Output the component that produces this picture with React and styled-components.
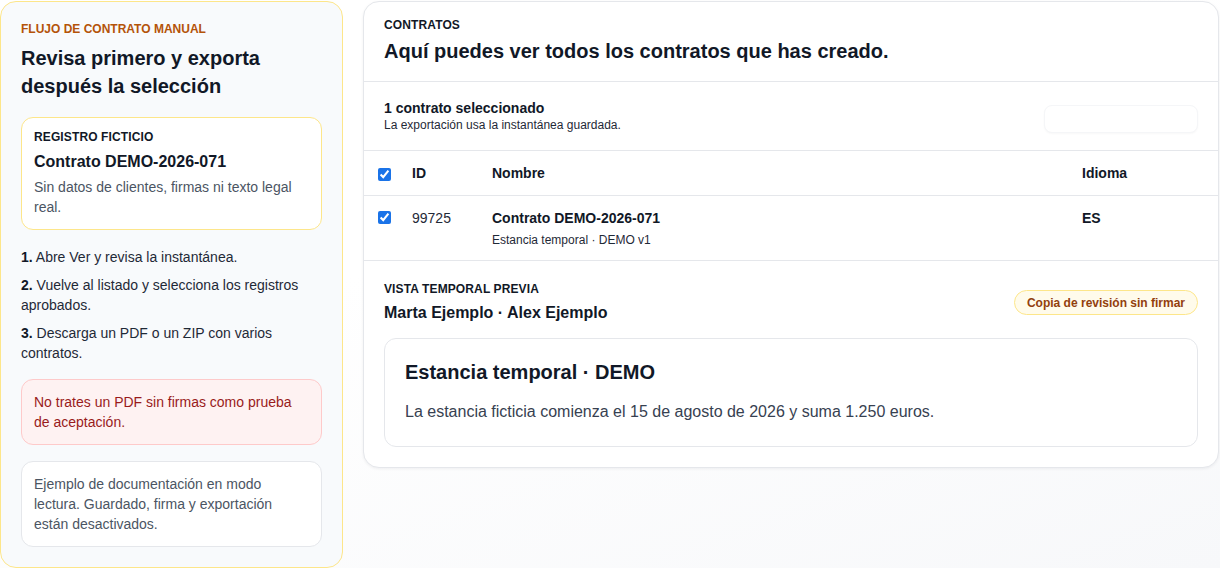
import React from 'react';
import styled, { createGlobalStyle } from 'styled-components';

const GlobalStyle = createGlobalStyle`
  html, body {
    margin: 0;
    padding: 0;
  }
  body {
    font-family: "Liberation Sans", Arial, sans-serif;
    color: #111827;
    background: linear-gradient(160deg, #ffffff 40%, #f7f8fa 100%);
    min-height: 100vh;
  }
  * {
    box-sizing: border-box;
  }
`;

const steps = [
  { n: '1.', text: 'Abre Ver y revisa la instantánea.' },
  { n: '2.', text: 'Vuelve al listado y selecciona los registros aprobados.' },
  { n: '3.', text: 'Descarga un PDF o un ZIP con varios contratos.' },
];

const contracts = [
  {
    id: '99725',
    name: 'Contrato DEMO-2026-071',
    sub: 'Estancia temporal · DEMO v1',
    lang: 'ES',
    checked: true,
  },
];

const App = () => {
  return (
    <>
      <GlobalStyle />
      <Page>
        <Sidebar>
          <Eyebrow>Flujo de contrato manual</Eyebrow>
          <SideTitle>Revisa primero y exporta después la selección</SideTitle>

          <RecordCard>
            <Label>Registro ficticio</Label>
            <RecordTitle>Contrato DEMO-2026-071</RecordTitle>
            <RecordText>Sin datos de clientes, firmas ni texto legal real.</RecordText>
          </RecordCard>

          <Steps>
            {steps.map((s) => (
              <Step key={s.n}>
                <strong>{s.n}</strong> {s.text}
              </Step>
            ))}
          </Steps>

          <Notice tone="danger">No trates un PDF sin firmas como prueba de aceptación.</Notice>
          <Notice tone="muted">
            Ejemplo de documentación en modo lectura. Guardado, firma y exportación están desactivados.
          </Notice>
        </Sidebar>

        <Main>
          <MainHeader>
            <Label>Contratos</Label>
            <MainTitle>Aquí puedes ver todos los contratos que has creado.</MainTitle>
          </MainHeader>

          <SelectionBar>
            <div>
              <SelectionTitle>1 contrato seleccionado</SelectionTitle>
              <SelectionHint>La exportación usa la instantánea guardada.</SelectionHint>
            </div>
            <GhostButton type="button" aria-label="Exportar" />
          </SelectionBar>

          <TableRow head>
            <Check type="checkbox" defaultChecked readOnly />
            <HeadCell>ID</HeadCell>
            <HeadCell>Nombre</HeadCell>
            <HeadCell>Idioma</HeadCell>
          </TableRow>

          {contracts.map((c) => (
            <TableRow key={c.id}>
              <Check type="checkbox" defaultChecked={c.checked} readOnly />
              <IdCell>{c.id}</IdCell>
              <div>
                <NameCell>{c.name}</NameCell>
                <SubCell>{c.sub}</SubCell>
              </div>
              <LangCell>{c.lang}</LangCell>
            </TableRow>
          ))}

          <Preview>
            <PreviewHeader>
              <div>
                <Label>Vista temporal previa</Label>
                <Parties>Marta Ejemplo · Alex Ejemplo</Parties>
              </div>
              <Badge>Copia de revisión sin firmar</Badge>
            </PreviewHeader>

            <DocCard>
              <DocTitle>Estancia temporal · DEMO</DocTitle>
              <DocText>La estancia ficticia comienza el 15 de agosto de 2026 y suma 1.250 euros.</DocText>
            </DocCard>
          </Preview>
        </Main>
      </Page>
    </>
  );
};

export default App;

// region STYLES

const Page = styled.div`
  display: grid;
  grid-template-columns: 343px 1fr;
  gap: 20px;
  align-items: start;
  padding: 1px 1px 0 0;
`;

const Sidebar = styled.aside`
  background: #f8fafc;
  border: 1px solid #fde68a;
  border-radius: 16px;
  padding: 19px 20px 20px;
  min-height: 566px;
`;

const Eyebrow = styled.div`
  font-size: 12px;
  line-height: 16px;
  font-weight: 700;
  text-transform: uppercase;
  color: #b45309;
`;

const SideTitle = styled.h2`
  margin: 7px 0 17px;
  font-size: 20px;
  line-height: 28px;
  font-weight: 700;
  color: #111827;
`;

const RecordCard = styled.div`
  background: #ffffff;
  border: 1px solid #fde68a;
  border-radius: 12px;
  padding: 11px 12px 12px;
`;

const Label = styled.div`
  font-size: 12px;
  line-height: 16px;
  font-weight: 700;
  text-transform: uppercase;
  color: #111827;
  letter-spacing: 0.01em;
`;

const RecordTitle = styled.div`
  margin-top: 6px;
  font-size: 16px;
  line-height: 22px;
  font-weight: 700;
`;

const RecordText = styled.p`
  margin: 4px 0 0;
  font-size: 14px;
  line-height: 20px;
  color: #4b5563;
`;

const Steps = styled.ol`
  list-style: none;
  margin: 17px 0 16px;
  padding: 0;
  display: flex;
  flex-direction: column;
  gap: 8px;
`;

const Step = styled.li`
  font-size: 14px;
  line-height: 20px;
  color: #1f2937;

  strong {
    color: #111827;
  }
`;

const Notice = styled.div`
  border-radius: 12px;
  padding: 12px;
  font-size: 14px;
  line-height: 20px;
  background: ${(p) => (p.tone === 'danger' ? '#fef2f2' : '#ffffff')};
  border: 1px solid ${(p) => (p.tone === 'danger' ? '#fecaca' : '#e5e7eb')};
  color: ${(p) => (p.tone === 'danger' ? '#991b1b' : '#4b5563')};

  & + & {
    margin-top: 16px;
  }
`;

const Main = styled.main`
  background: #ffffff;
  border: 1px solid #e5e7eb;
  border-radius: 16px;
  box-shadow: 0 1px 3px rgba(15, 23, 42, 0.06);
  overflow: hidden;
`;

const MainHeader = styled.header`
  padding: 15px 20px 16px;
  border-bottom: 1px solid #e5e7eb;
`;

const MainTitle = styled.h1`
  margin: 4px 0 0;
  font-size: 20px;
  line-height: 28px;
  font-weight: 700;
  color: #111827;
`;

const SelectionBar = styled.div`
  display: flex;
  align-items: center;
  justify-content: space-between;
  padding: 17px 20px 17px;
  border-bottom: 1px solid #e5e7eb;
`;

const SelectionTitle = styled.div`
  font-size: 14px;
  line-height: 18px;
  font-weight: 700;
`;

const SelectionHint = styled.div`
  font-size: 12px;
  line-height: 16px;
  color: #1f2937;
`;

const GhostButton = styled.button`
  width: 154px;
  height: 28px;
  margin-top: 6px;
  border: 1px solid #f5f6f8;
  border-radius: 8px;
  background: #ffffff;
  box-shadow: 0 1px 2px rgba(15, 23, 42, 0.03);
`;

const TableRow = styled.div`
  display: grid;
  grid-template-columns: 34px 80px 1fr 136px;
  align-items: ${(p) => (p.head ? 'center' : 'start')};
  padding: ${(p) => (p.head ? '0 0 0 14px' : '13px 0 12px 14px')};
  height: ${(p) => (p.head ? '45px' : '65px')};
  border-bottom: 1px solid #e5e7eb;
`;

const Check = styled.input`
  width: 13px;
  height: 13px;
  margin: ${(p) => (p.defaultChecked ? '2px 0 0' : '0')};
  accent-color: #1a73e8;
`;

const HeadCell = styled.div`
  font-size: 14px;
  font-weight: 700;
  color: #111827;
`;

const IdCell = styled.div`
  font-size: 14px;
  line-height: 18px;
  color: #1f2937;
`;

const NameCell = styled.div`
  font-size: 14px;
  line-height: 18px;
  font-weight: 700;
`;

const SubCell = styled.div`
  margin-top: 5px;
  font-size: 12px;
  line-height: 16px;
  color: #1f2937;
`;

const LangCell = styled.div`
  font-size: 14px;
  line-height: 18px;
  font-weight: 700;
`;

const Preview = styled.section`
  padding: 20px 20px 20px;
`;

const PreviewHeader = styled.div`
  display: flex;
  align-items: center;
  justify-content: space-between;
  margin-bottom: 14px;
`;

const Parties = styled.div`
  margin-top: 5px;
  font-size: 16px;
  line-height: 22px;
  font-weight: 700;
`;

const Badge = styled.span`
  display: inline-flex;
  align-items: center;
  height: 25px;
  padding: 0 12px;
  border-radius: 999px;
  background: #fffbeb;
  border: 1px solid #fde68a;
  color: #92400e;
  font-size: 12px;
  font-weight: 700;
`;

const DocCard = styled.article`
  border: 1px solid #e5e7eb;
  border-radius: 12px;
  padding: 19px 20px 22px;
`;

const DocTitle = styled.h3`
  margin: 0;
  font-size: 20px;
  line-height: 28px;
  font-weight: 700;
  color: #111827;
`;

const DocText = styled.p`
  margin: 14px 0 0;
  font-size: 16px;
  line-height: 24px;
  color: #374151;
`;

// endregion
